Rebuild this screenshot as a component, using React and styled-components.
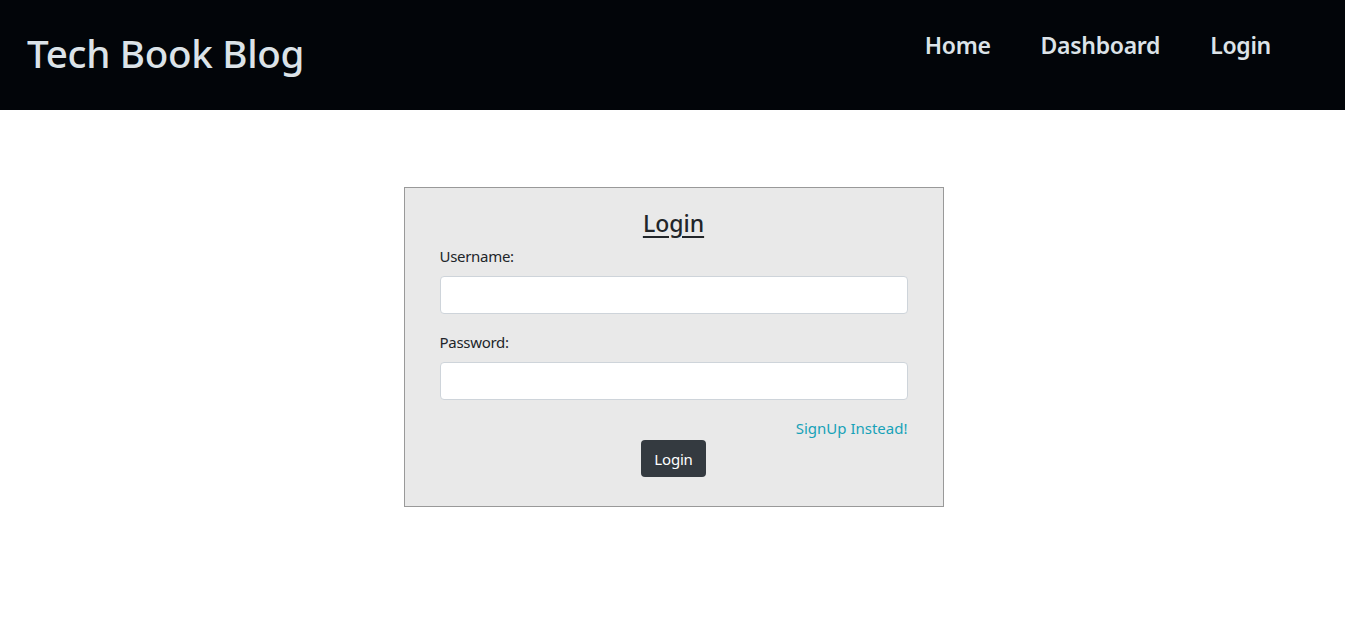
import React from 'react';
import styled, { createGlobalStyle } from 'styled-components';

const GlobalStyle = createGlobalStyle`
  * {
    box-sizing: border-box;
  }

  body {
    margin: 0;
    font-family: 'Noto Sans', 'Open Sans', sans-serif;
    color: #212529;
    background: #fff;
  }
`;

const Header = styled.header`
  height: 110px;
  background: #020509;
  display: flex;
  align-items: center;
  justify-content: space-between;
  padding: 0 74px 0 27px;
`;

const Brand = styled.h1`
  margin: 0;
  font-size: 38.6px;
  font-weight: 500;
  color: #dce3e8;
  letter-spacing: -0.3px;
  transform: translateY(-2px);
`;

const Nav = styled.nav`
  display: flex;
  gap: 50px;
  transform: translateY(-10px);

  a {
    font-size: 23px;
    font-weight: 600;
    color: #dce3e8;
    text-decoration: none;
    letter-spacing: -0.3px;
  }
`;

const Main = styled.main`
  display: flex;
  justify-content: center;
  padding: 77px 0 0 2px;
`;

const Card = styled.form`
  width: 540px;
  height: 320px;
  background: #e9e9e9;
  border: 1px solid #999;
  padding: 22px 35px 0;
  display: flex;
  flex-direction: column;
`;

const Title = styled.h2`
  margin: 0 0 6px;
  text-align: center;
  font-size: 23px;
  font-weight: 500;
  text-decoration: underline;
  text-underline-offset: 4px;
  line-height: 30px;
  transform: translateY(-2px);
`;

const Field = styled.div`
  display: flex;
  flex-direction: column;
  margin-bottom: 18px;
`;

const Label = styled.label`
  font-size: 15px;
  line-height: 20px;
  margin-bottom: 10px;
  letter-spacing: -0.3px;
`;

const Input = styled.input`
  height: 38px;
  border: 1px solid #ced4da;
  border-radius: 4px;
  background: #fff;
  padding: 6px 12px;
  font: inherit;
`;

const SignUp = styled.a`
  align-self: flex-end;
  font-size: 15px;
  line-height: 20px;
  color: #17a2b8;
  text-decoration: none;
  margin-top: 0;
  letter-spacing: 0;
`;

const Button = styled.button`
  align-self: center;
  margin-top: 2px;
  width: 65px;
  height: 37px;
  border: none;
  border-radius: 4px;
  background: #343a40;
  color: #fff;
  font-family: inherit;
  font-size: 15px;
  letter-spacing: -0.2px;
`;

const App = () => {
  return (
    <>
      <GlobalStyle />
      <Header>
        <Brand>Tech Book Blog</Brand>
        <Nav>
          <a href="#home">Home</a>
          <a href="#dashboard">Dashboard</a>
          <a href="#login">Login</a>
        </Nav>
      </Header>
      <Main>
        <Card onSubmit={(e) => e.preventDefault()}>
          <Title>Login</Title>
          <Field>
            <Label htmlFor="username">Username:</Label>
            <Input id="username" type="text" />
          </Field>
          <Field>
            <Label htmlFor="password">Password:</Label>
            <Input id="password" type="password" />
          </Field>
          <SignUp href="#signup">SignUp Instead!</SignUp>
          <Button type="submit">Login</Button>
        </Card>
      </Main>
    </>
  );
};

export default App;
